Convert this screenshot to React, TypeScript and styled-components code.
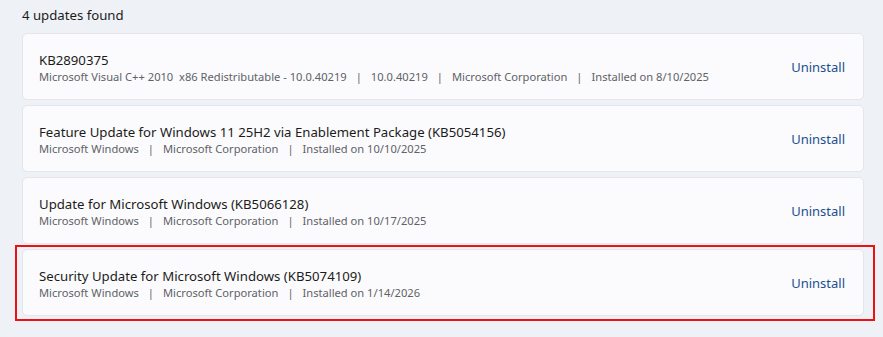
import React from "react";
import styled, { createGlobalStyle } from "styled-components";

const Global = createGlobalStyle`
  html, body { margin: 0; padding: 0; background: #eef2f7; }
  body { font-family: "Noto Sans", "Open Sans", sans-serif; -webkit-font-smoothing: antialiased; }
`;

const Page = styled.div`
  width: 883px;
  height: 337px;
  box-sizing: border-box;
  padding: 4px 19px 0 22px;
  background: #eef2f7;
  overflow: hidden;
`;

const Heading = styled.div`
  font-size: 13.2px;
  color: #1b1b1b;
  height: 25px;
  line-height: 23px;
  margin-bottom: 4px;
`;

const List = styled.div`
  display: flex;
  flex-direction: column;
  gap: 5px;
`;

const Wrap = styled.div`
  position: relative;
`;

const Highlight = styled.div`
  position: absolute;
  top: -4px;
  left: -7px;
  right: -11px;
  bottom: -5px;
  border: 2px solid #ee1111;
  pointer-events: none;
`;

const Card = styled.div`
  box-sizing: border-box;
  height: 67px;
  display: flex;
  align-items: center;
  justify-content: space-between;
  padding: 0 18px 0 16px;
  background: #fbfbfd;
  border: 1px solid #e3e6eb;
  border-radius: 5px;
`;

const Info = styled.div`
  display: flex;
  flex-direction: column;
  padding-top: 3px;
`;

const Title = styled.div`
  font-size: 13.2px;
  color: #1b1b1b;
  line-height: 18px;
`;

const Meta = styled.div`
  font-size: 11.15px;
  color: #606266;
  line-height: 16px;
  white-space: pre;
  display: flex;
`;

const Sep = styled.span`
  margin: 0 9px;
`;

const Link = styled.a`
  font-size: 13px;
  color: #1c4f8e;
  text-decoration: none;
  cursor: pointer;
`;

type Update = { title: string; meta: string[]; highlight?: boolean };

const updates: Update[] = [
  {
    title: "KB2890375",
    meta: [
      "Microsoft Visual C++ 2010  x86 Redistributable - 10.0.40219",
      "10.0.40219",
      "Microsoft Corporation",
      "Installed on 8/10/2025",
    ],
  },
  {
    title: "Feature Update for Windows 11 25H2 via Enablement Package (KB5054156)",
    meta: ["Microsoft Windows", "Microsoft Corporation", "Installed on 10/10/2025"],
  },
  {
    title: "Update for Microsoft Windows (KB5066128)",
    meta: ["Microsoft Windows", "Microsoft Corporation", "Installed on 10/17/2025"],
  },
  {
    title: "Security Update for Microsoft Windows (KB5074109)",
    meta: ["Microsoft Windows", "Microsoft Corporation", "Installed on 1/14/2026"],
    highlight: true,
  },
];

export default function App() {
  return (
    <Page>
      <Global />
      <Heading>4 updates found</Heading>
      <List>
        {updates.map((u) => (
          <Wrap key={u.title}>
            <Card>
              <Info>
                <Title>{u.title}</Title>
                <Meta>
                  {u.meta.map((m, i) => (
                    <React.Fragment key={i}>
                      {i > 0 && <Sep>|</Sep>}
                      <span>{m}</span>
                    </React.Fragment>
                  ))}
                </Meta>
              </Info>
              <Link>Uninstall</Link>
            </Card>
            {u.highlight && <Highlight />}
          </Wrap>
        ))}
      </List>
    </Page>
  );
}
